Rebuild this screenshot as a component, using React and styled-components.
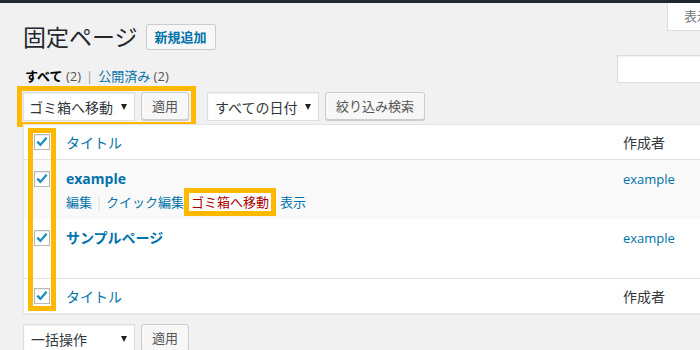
import React from 'react';
import styled, { createGlobalStyle } from 'styled-components';

const GlobalStyle = createGlobalStyle`
  html, body {
    margin: 0;
    background: #f1f1f1;
    overflow: hidden;
  }
  body {
    font-family: "Open Sans", "Noto Sans CJK JP", sans-serif;
    font-size: 13px;
    color: #444;
  }
`;

const AdminBar = styled.div`
  height: 3px;
  background: #23282d;
`;

const Wrap = styled.div`
  width: 800px;
  box-sizing: border-box;
  padding-left: 23px;
`;

const ScreenTab = styled.div`
  float: right;
  width: 133px;
  height: 28px;
  box-sizing: border-box;
  padding-left: 16px;
  background: #fff;
  border: 1px solid #ddd;
  border-top: 0;
  color: #72777c;
  font-size: 13px;
  line-height: 27px;
  white-space: nowrap;
`;

const Heading = styled.div`
  display: flex;
  align-items: center;
  gap: 8px;
  padding-top: 21px;
`;

const Title = styled.h1`
  margin: 0;
  font-size: 23px;
  font-weight: 400;
  line-height: 26px;
  color: #23282d;
`;

const AddButton = styled.span`
  height: 26px;
  box-sizing: border-box;
  padding: 0 8px;
  border: 1px solid #ccc;
  border-radius: 2px;
  background: #f7f7f7;
  color: #0073aa;
  font-size: 13px;
  font-weight: 700;
  line-height: 24px;
`;

const SubRow = styled.div`
  display: flex;
  justify-content: space-between;
  align-items: flex-start;
  height: 28px;
  margin-top: 5px;
`;

const Views = styled.div`
  margin-top: 11px;
  padding-left: 2px;
  font-size: 13px;
  line-height: 20px;
  color: #777;
  white-space: nowrap;
`;

const ViewLink = styled.span`
  color: ${p => (p.$current ? '#000' : '#0073aa')};
  font-weight: ${p => (p.$current ? 700 : 400)};
`;

const Count = styled.span`
  color: #555;
  font-weight: 400;
`;

const Sep = styled.span`
  color: #999;
  margin: 0 5px;
`;

const SearchBox = styled.div`
  width: 183px;
  height: 28px;
  box-sizing: border-box;
  background: #fff;
  border: 1px solid #ddd;
  box-shadow: inset 0 1px 2px rgba(0, 0, 0, 0.07);
`;

const TableNav = styled.div`
  display: flex;
  align-items: center;
  margin-top: ${p => p.$top}px;
`;

const Group = styled.div`
  position: relative;
  display: flex;
  gap: 6px;
  margin-right: ${p => p.$after || 0}px;
`;

const Highlight = styled.div`
  position: absolute;
  top: -6px;
  left: -6px;
  right: -7px;
  bottom: -6px;
  border: 5px solid #ffb900;
  pointer-events: none;
`;

const Select = styled.div`
  width: ${p => p.$w}px;
  height: 29px;
  box-sizing: border-box;
  display: flex;
  align-items: center;
  justify-content: space-between;
  padding: 0 7px 0 ${p => p.$pl}px;
  background: #fff;
  border: 1px solid #ddd;
  box-shadow: inset 0 1px 2px rgba(0, 0, 0, 0.07);
  color: #32373c;
  font-size: 14px;
  white-space: nowrap;
`;

const Arrow = styled.span`
  width: 0;
  height: 0;
  border-left: 3px solid transparent;
  border-right: 3px solid transparent;
  border-top: 6px solid #222;
`;

const Button = styled.span`
  height: 28px;
  box-sizing: border-box;
  padding: 0 10px;
  border: 1px solid #ccc;
  border-radius: 3px;
  background: #f7f7f7;
  box-shadow: 0 1px 0 #ccc;
  color: #555;
  font-size: 13px;
  line-height: 26px;
  white-space: nowrap;
`;

const Table = styled.div`
  position: relative;
  width: 777px;
  margin-top: 3px;
  background: #fff;
  border: 1px solid #e5e5e5;
  box-shadow: 0 1px 1px rgba(0, 0, 0, 0.04);
`;

const Row = styled.div`
  display: grid;
  grid-template-columns: 32px 557px 1fr;
  background: ${p => (p.$alt ? '#f9f9f9' : '#fff')};
  border-top: ${p => (p.$lineTop ? '1px solid #e1e1e1' : '0')};
  border-bottom: ${p => (p.$lineBottom ? '1px solid #e1e1e1' : '0')};
`;

const CheckCell = styled.div`
  padding: ${p => (p.$head ? '9px' : '11px')} 0 0 10px;
`;

const HeadCell = styled.div`
  height: 34px;
  padding: 0 10px;
  display: flex;
  align-items: center;
  font-size: 14px;
  color: ${p => (p.$link ? '#0073aa' : '#32373c')};
`;

const Cell = styled.div`
  padding: 9px 10px 7px;
  font-size: 13px;
  line-height: 20px;
  color: #0073aa;
`;

const RowTitle = styled.div`
  font-size: 14px;
  font-weight: 700;
  line-height: 20px;
  color: #0073aa;
`;

const RowActions = styled.div`
  padding-top: 3px;
  font-size: 13px;
  line-height: 20px;
  color: #ddd;
  white-space: nowrap;
  visibility: ${p => (p.$off ? 'hidden' : 'visible')};
`;

const ActionLink = styled.span`
  color: ${p => (p.$danger ? '#a00' : '#0073aa')};
`;

const TrashMark = styled.span`
  margin: 0 4px 0 0;
  padding: 0 2px;
  border: 5px solid #ffb900;
  background: #fff;
`;

const ColumnHighlight = styled.div`
  position: absolute;
  top: 3px;
  bottom: 2px;
  left: 4px;
  width: 28px;
  box-sizing: border-box;
  border: 5px solid #ffb900;
  pointer-events: none;
`;

const Box = styled.span`
  display: flex;
  align-items: center;
  justify-content: center;
  width: 16px;
  height: 16px;
  box-sizing: border-box;
  background: #fff;
  border: 1px solid #b4b9be;
  box-shadow: inset 0 1px 2px rgba(0, 0, 0, 0.1);
`;

const Checkbox = () => (
  <Box>
    <svg width="14" height="14" viewBox="0 0 14 14">
      <path d="M2.3 6.6 L5.4 9.9 L11.6 2.8" fill="none" stroke="#1e8cbe" strokeWidth="2.3" />
    </svg>
  </Box>
);

const pages = [
  { title: 'example', author: 'example', actions: true },
  { title: 'サンプルページ', author: 'example', actions: false },
];

export default function App() {
  return (
    <>
      <GlobalStyle />
      <AdminBar />
      <Wrap>
        <ScreenTab>表示オプション</ScreenTab>
        <Heading>
          <Title>固定ページ</Title>
          <AddButton>新規追加</AddButton>
        </Heading>

        <SubRow>
          <Views>
            <ViewLink $current>すべて <Count>(2)</Count></ViewLink>
            <Sep>|</Sep>
            <ViewLink>公開済み <Count>(2)</Count></ViewLink>
          </Views>
          <SearchBox />
        </SubRow>

        <TableNav $top={9}>
          <Group $after={18}>
            <Select $w={112} $pl={5}>ゴミ箱へ移動<Arrow /></Select>
            <Button>適用</Button>
            <Highlight />
          </Group>
          <Group>
            <Select $w={112} $pl={7}>すべての日付<Arrow /></Select>
            <Button>絞り込み検索</Button>
          </Group>
        </TableNav>

        <Table>
          <Row $lineBottom>
            <CheckCell $head><Checkbox /></CheckCell>
            <HeadCell $link>タイトル</HeadCell>
            <HeadCell>作成者</HeadCell>
          </Row>
          {pages.map((p, i) => (
            <Row key={p.title} $alt={i % 2 === 0}>
              <CheckCell><Checkbox /></CheckCell>
              <Cell>
                <RowTitle>{p.title}</RowTitle>
                <RowActions $off={!p.actions}>
                  <ActionLink>編集</ActionLink> | <ActionLink>クイック編集</ActionLink>
                  <TrashMark><ActionLink $danger>ゴミ箱へ移動</ActionLink></TrashMark>
                  <ActionLink>表示</ActionLink>
                </RowActions>
              </Cell>
              <Cell>{p.author}</Cell>
            </Row>
          ))}
          <Row $lineTop>
            <CheckCell $head><Checkbox /></CheckCell>
            <HeadCell $link>タイトル</HeadCell>
            <HeadCell>作成者</HeadCell>
          </Row>
          <ColumnHighlight />
        </Table>

        <TableNav $top={10}>
          <Group>
            <Select $w={112} $pl={7}>一括操作<Arrow /></Select>
            <Button>適用</Button>
          </Group>
        </TableNav>
      </Wrap>
    </>
  );
}
